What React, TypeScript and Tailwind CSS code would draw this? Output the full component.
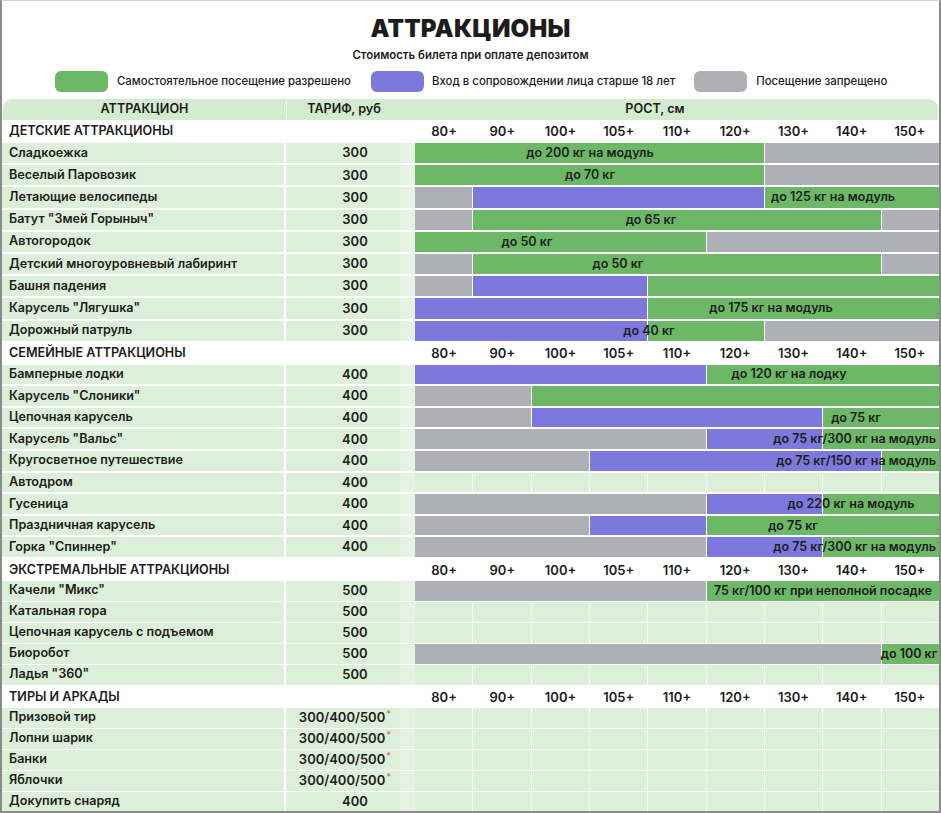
import * as React from 'react'

// ============================================================================
// DATA
// ============================================================================

type Fill = 'g' | 'p' | 'x'
type Seg = [Fill, number]
type Label = { text: string; x?: number; right?: boolean }

interface Ride {
  name: string
  price: string
  star?: boolean
  segs?: Seg[]
  label?: Label
}

interface Section {
  title: string
  headH: string
  rowH: string
  rides: Ride[]
}

const CHART_X = 415
const HEIGHTS = ['80+', '90+', '100+', '105+', '110+', '120+', '130+', '140+', '150+']

const SPAN: Record<number, string> = {
  1: 'col-span-1',
  2: 'col-span-2',
  3: 'col-span-3',
  4: 'col-span-4',
  5: 'col-span-5',
  6: 'col-span-6',
  7: 'col-span-7',
  8: 'col-span-8',
  9: 'col-span-9',
}

const FILL: Record<Fill, string> = {
  g: 'bg-[#6cb866]',
  p: 'bg-[#7d79dc]',
  x: 'bg-[#aeb0b5]',
}

const SECTIONS: Section[] = [
  {
    title: 'ДЕТСКИЕ АТТРАКЦИОНЫ',
    headH: 'h-[23px]',
    rowH: 'h-[22.2px]',
    rides: [
      { name: 'Сладкоежка', price: '300', segs: [['g', 6], ['x', 3]], label: { text: 'до 200 кг на модуль', x: 590 } },
      { name: 'Веселый Паровозик', price: '300', segs: [['g', 6], ['x', 3]], label: { text: 'до 70 кг', x: 590 } },
      { name: 'Летающие велосипеды', price: '300', segs: [['x', 1], ['p', 5], ['g', 3]], label: { text: 'до 125 кг на модуль', x: 833 } },
      { name: 'Батут "Змей Горыныч"', price: '300', segs: [['x', 1], ['g', 7], ['x', 1]], label: { text: 'до 65 кг', x: 651 } },
      { name: 'Автогородок', price: '300', segs: [['g', 5], ['x', 4]], label: { text: 'до 50 кг', x: 527 } },
      { name: 'Детский многоуровневый лабиринт', price: '300', segs: [['x', 1], ['g', 7], ['x', 1]], label: { text: 'до 50 кг', x: 618 } },
      { name: 'Башня падения', price: '300', segs: [['x', 1], ['p', 3], ['g', 5]] },
      { name: 'Карусель "Лягушка"', price: '300', segs: [['p', 4], ['g', 5]], label: { text: 'до 175 кг на модуль', x: 771 } },
      { name: 'Дорожный патруль', price: '300', segs: [['p', 4], ['g', 2], ['x', 3]], label: { text: 'до 40 кг', x: 649 } },
    ],
  },
  {
    title: 'СЕМЕЙНЫЕ АТТРАКЦИОНЫ',
    headH: 'h-[22px]',
    rowH: 'h-[21.6px]',
    rides: [
      { name: 'Бамперные лодки', price: '400', segs: [['p', 5], ['g', 4]], label: { text: 'до 120 кг на лодку', x: 789 } },
      { name: 'Карусель "Слоники"', price: '400', segs: [['x', 2], ['g', 7]] },
      { name: 'Цепочная карусель', price: '400', segs: [['x', 2], ['p', 5], ['g', 2]], label: { text: 'до 75 кг', x: 856 } },
      { name: 'Карусель "Вальс"', price: '400', segs: [['x', 5], ['p', 2], ['g', 2]], label: { text: 'до 75 кг/300 кг на модуль', right: true } },
      { name: 'Кругосветное путешествие', price: '400', segs: [['x', 3], ['p', 5], ['g', 1]], label: { text: 'до 75 кг/150 кг на модуль', right: true } },
      { name: 'Автодром', price: '400' },
      { name: 'Гусеница', price: '400', segs: [['x', 5], ['p', 2], ['g', 2]], label: { text: 'до 220 кг на модуль', x: 851 } },
      { name: 'Праздничная карусель', price: '400', segs: [['x', 3], ['p', 2], ['g', 4]], label: { text: 'до 75 кг', x: 793 } },
      { name: 'Горка "Спиннер"', price: '400', segs: [['x', 5], ['p', 2], ['g', 2]], label: { text: 'до 75 кг/300 кг на модуль', right: true } },
    ],
  },
  {
    title: 'ЭКСТРЕМАЛЬНЫЕ АТТРАКЦИОНЫ',
    headH: 'h-[22px]',
    rowH: 'h-[21px]',
    rides: [
      { name: 'Качели "Микс"', price: '500', segs: [['x', 5], ['g', 4]], label: { text: '75 кг/100 кг при неполной посадке', x: 823 } },
      { name: 'Катальная гора', price: '500' },
      { name: 'Цепочная карусель с подъемом', price: '500' },
      { name: 'Биоробот', price: '500', segs: [['x', 8], ['g', 1]], label: { text: 'до 100 кг', x: 909 } },
      { name: 'Ладья "360"', price: '500' },
    ],
  },
  {
    title: 'ТИРЫ И АРКАДЫ',
    headH: 'h-[22px]',
    rowH: 'h-[21px]',
    rides: [
      { name: 'Призовой тир', price: '300/400/500', star: true },
      { name: 'Лопни шарик', price: '300/400/500', star: true },
      { name: 'Банки', price: '300/400/500', star: true },
      { name: 'Яблочки', price: '300/400/500', star: true },
      { name: 'Докупить снаряд', price: '400' },
    ],
  },
]

// ============================================================================
// PIECES
// ============================================================================

const ROW_GRID = 'grid grid-cols-[284px_114px_15px_1fr]'

function Swatch({ color }: { color: string }) {
  return <span className={`block h-[21px] w-[53px] rounded-[6px] ${color}`} />
}

function SectionHeader({ title, headH }: { title: string; headH: string }) {
  return (
    <div className={`${ROW_GRID} ${headH} items-center bg-white`}>
      <div className="col-span-3 pl-[7px] text-[12.6px] font-semibold uppercase text-[#1c1c1c]">
        {title}
      </div>
      <div className="grid grid-cols-9 pt-px">
        {HEIGHTS.map((h) => (
          <span key={h} className="text-center text-[13px] font-semibold text-[#1c1c1c]">
            {h}
          </span>
        ))}
      </div>
    </div>
  )
}

function ChartCells({ ride }: { ride: Ride }) {
  if (!ride.segs) {
    return (
      <div className="grid h-full grid-cols-9 gap-x-px bg-white">
        {HEIGHTS.map((h) => (
          <span key={h} className="bg-[#dcefd8]" />
        ))}
      </div>
    )
  }

  return (
    <div className="relative grid h-full grid-cols-9 gap-x-px bg-white">
      {ride.segs.map(([fill, span], i) => (
        <span key={i} className={`${SPAN[span]} ${FILL[fill]}`} />
      ))}
      {ride.label && (
        <span
          className={`absolute top-1/2 -translate-y-1/2 whitespace-nowrap text-[12.5px] font-semibold text-[#1c1c1c] ${
            ride.label.right ? 'right-[3px]' : '-translate-x-1/2'
          }`}
          style={ride.label.right ? undefined : { left: `${(ride.label.x ?? 0) - CHART_X}px` }}
        >
          {ride.label.text}
        </span>
      )}
    </div>
  )
}

function RideRow({ ride, rowH }: { ride: Ride; rowH: string }) {
  return (
    <div className={`${ROW_GRID} ${rowH} border-b-2 border-white`}>
      <div className="flex items-center border-r-2 border-white bg-[#dcefd8] pl-[7px] text-[12.6px] font-semibold text-[#1c1c1c]">
        {ride.name}
      </div>
      <div
        className={`flex items-center justify-center bg-[#dcefd8] text-[13px] font-semibold text-[#1c1c1c] ${
          ride.star ? 'pl-[4px]' : 'pl-6'
        }`}
      >
        {ride.price}
        {ride.star && <span className="-mt-2 ml-px text-[9px] text-[#e0706d]">*</span>}
      </div>
      <div className="bg-[#e6f3e3]" />
      <ChartCells ride={ride} />
    </div>
  )
}

// ============================================================================
// PAGE
// ============================================================================

export default function App() {
  return (
    <div className="h-[813px] w-[941px] overflow-hidden border-x-2 border-b-2 border-t border-x-[#8a8a8a] border-b-[#8a8a8a] border-t-[#cfcfcf] bg-white font-['Inter','Noto_Sans',sans-serif] text-[#1c1c1c]">
      <div className="flex h-[98px] flex-col items-center">
        <h1 className="mt-[12px] text-[24px] font-black leading-[32px] tracking-[0.2px]">
          АТТРАКЦИОНЫ
        </h1>
        <p className="mt-[3px] text-[11.4px] font-semibold leading-[14px]">
          Стоимость билета при оплате депозитом
        </p>
        <div className="mt-[9px] flex w-full items-center pl-[53px] text-[11.4px] font-medium">
          <Swatch color="bg-[#6cb866]" />
          <span className="ml-[9px]">Самостоятельное посещение разрешено</span>
          <span className="ml-[20px]">
            <Swatch color="bg-[#7d79dc]" />
          </span>
          <span className="ml-[8px]">Вход в сопровождении лица старше 18 лет</span>
          <span className="ml-[19px]">
            <Swatch color="bg-[#aeb0b5]" />
          </span>
          <span className="ml-[9px]">Посещение запрещено</span>
        </div>
      </div>

      <div className={`${ROW_GRID} mx-px h-[21px] items-center rounded-t-[9px] bg-[#d3ebcf] text-[12.6px] font-semibold`}>
        <span className="border-r border-white text-center">АТТРАКЦИОН</span>
        <span className="text-center">ТАРИФ, руб</span>
        <span />
        <span className="pr-[44px] text-center">РОСТ, см</span>
      </div>

      {SECTIONS.map((section) => (
        <div key={section.title}>
          <SectionHeader title={section.title} headH={section.headH} />
          {section.rides.map((ride) => (
            <RideRow key={ride.name} ride={ride} rowH={section.rowH} />
          ))}
        </div>
      ))}
    </div>
  )
}
